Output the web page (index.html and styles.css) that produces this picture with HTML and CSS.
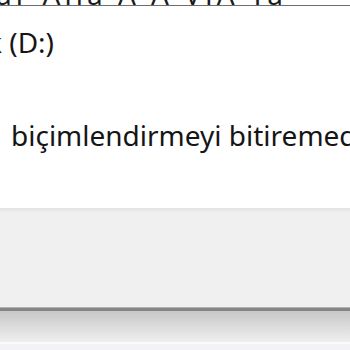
FILE: index.html
```html
<!DOCTYPE html>
<html lang="tr">
<head>
<meta charset="utf-8">
<title>Biçimlendirme</title>
<link rel="stylesheet" href="styles.css">
</head>
<body>
<div class="window">
  <div class="top-strip"><div class="top-text">ar Alıa A A VJA Ta</div></div>
  <div class="main">
    <div class="drive">k (D:)</div>
    <div class="message">biçimlendirmeyi bitiremedi.</div>
  </div>
  <div class="footer"></div>
  <div class="frame-edge"></div>
  <div class="frame-shade"></div>
  <div class="frame-base"></div>
</div>
</body>
</html>
```
FILE: styles.css
```css
html, body {
  margin: 0;
  padding: 0;
  background: #ffffff;
}
.window {
  width: 350px;
  height: 350px;
  overflow: hidden;
  display: flex;
  flex-direction: column;
  font-family: "Noto Sans", "Open Sans", sans-serif;
  color: #151515;
}
.top-strip {
  height: 5px;
  overflow: hidden;
  border-bottom: 1px solid #6e6e6e;
  flex: none;
}
.top-text {
  font-size: 28px;
  line-height: 28px;
  margin-top: -20px;
  margin-left: -4px;
  white-space: nowrap;
  letter-spacing: 4px;
  color: #1c1c1c;
}
.main {
  height: 202px;
  flex: none;
  display: flex;
  flex-direction: column;
  padding-left: 11px;
  white-space: nowrap;
  font-size: 28px;
  line-height: 28px;
}
.drive {
  margin-top: 22px;
  margin-left: -24px;
}
.message {
  margin-top: 65px;
}
.footer {
  flex: none;
  height: 97px;
  background: #f0f0f0;
  border-top: 2px solid #e4e4e4;
  box-shadow: inset 0 2px 0 #ececec;
}
.frame-edge {
  flex: none;
  height: 3px;
  background: #858585;
  border-top: 1px solid #b2b2b2;
}
.frame-shade {
  flex: none;
  height: 31px;
  background: linear-gradient(#c8c8c8, #efefef);
}
.frame-base {
  flex: none;
  height: 6px;
  background: #f3f3f6;
  border-top: 2px solid #fbfbfb;
}
```
